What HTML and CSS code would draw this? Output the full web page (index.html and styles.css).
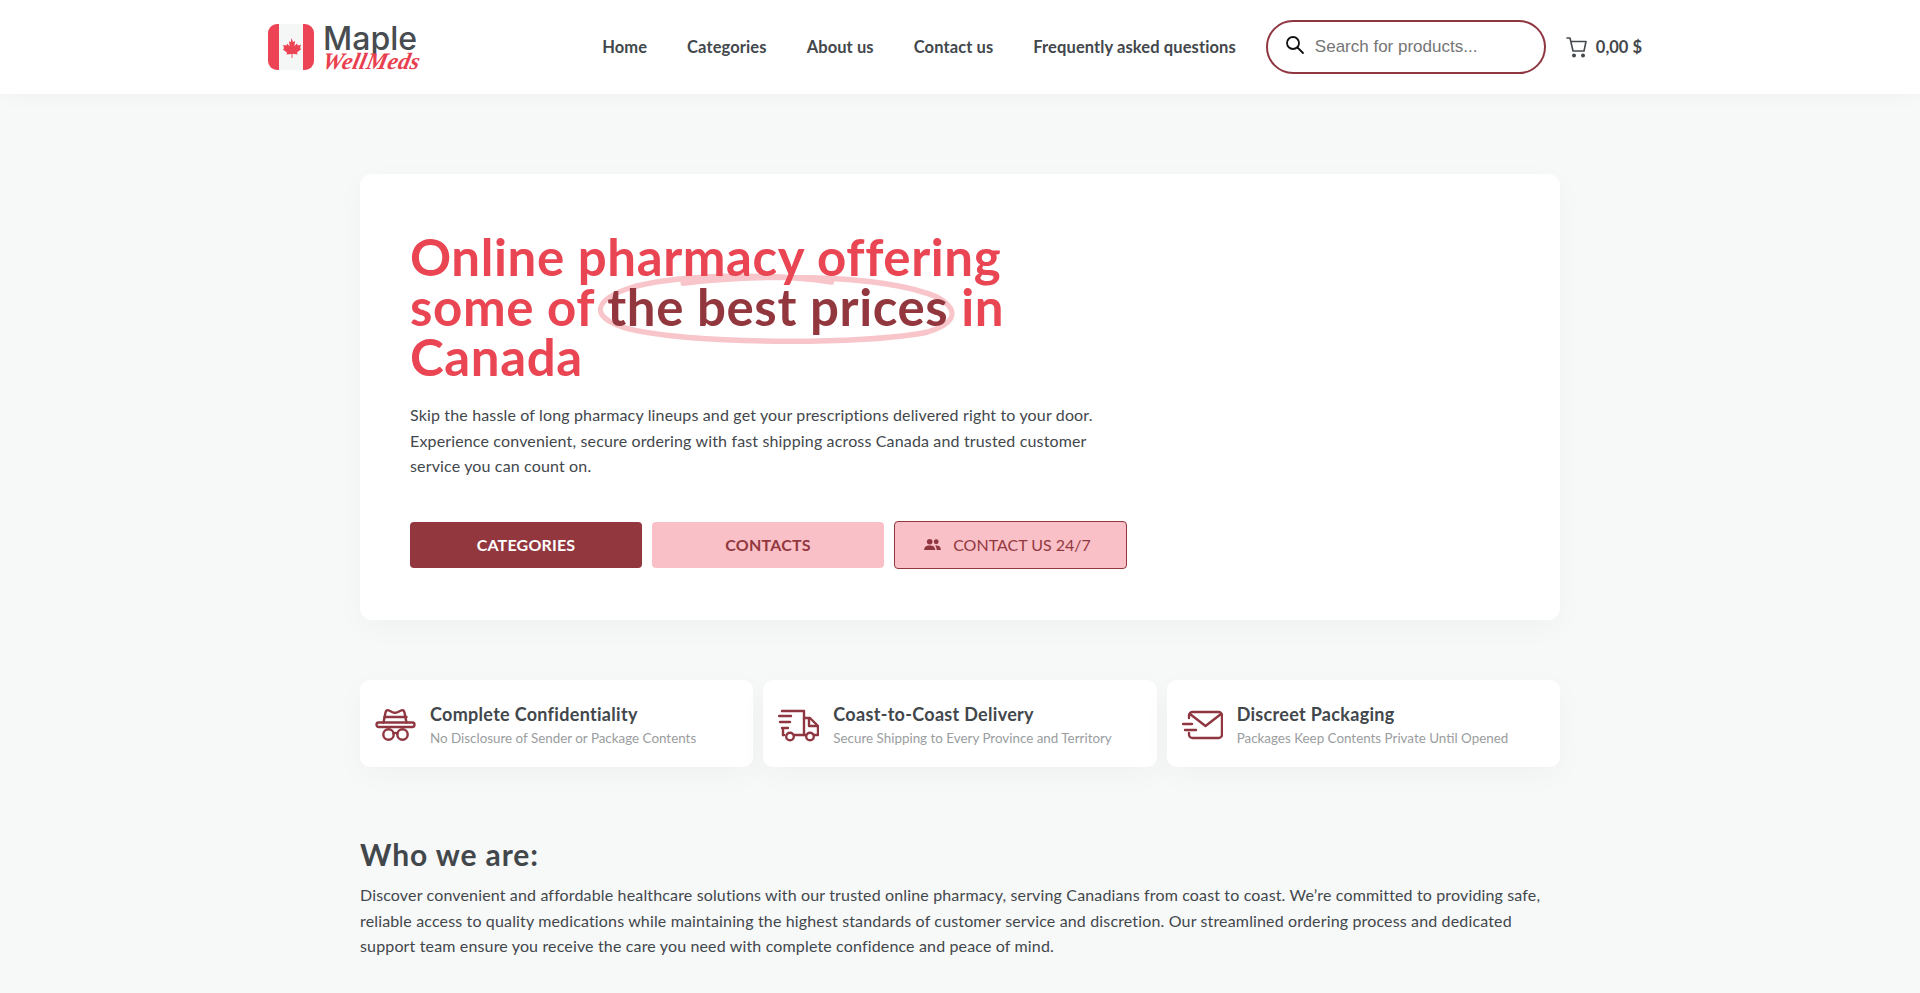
FILE: index.html
```html
<!DOCTYPE html>
<html lang="en">
<head>
  <meta charset="UTF-8" />
  <meta name="viewport" content="width=device-width, initial-scale=1" />
  <title>Maple WellMeds</title>
  <link rel="stylesheet" href="styles.css">
</head>
<body>

  <!-- Header -->
  <header class="site-header">
    <div class="header-inner">
      <a class="logo" href="#">
        <svg class="logo-flag" viewBox="0 0 46 46">
          <rect width="46" height="46" rx="9" fill="#ec4455" />
          <rect x="11" width="24" height="46" fill="#f5f6f6" />
          <path d="M23 14l2.200 4 2-1-.8 5 2.600-2.400.8 1.800 3.200-.6-1 3.400 1.400.8-4.400 3.600.6 1.800-4.800-.6-.3 0.200V34h-.9v-3.800l-.3-.2-4.800.6.600-1.800-4.400-3.600 1.400-.8-1-3.400 3.200.6.800-1.800 2.600 2.400-.8-5 2 1z" fill="#ec4455" />
        </svg>
        <span class="logo-text">
          <span class="logo-maple">Maple</span>
          <span class="logo-well">WellMeds</span>
        </span>
      </a>

      <nav class="main-nav">
        <a href="#">Home</a>
        <a href="#">Categories</a>
        <a href="#">About us</a>
        <a href="#">Contact us</a>
        <a href="#">Frequently asked questions</a>
      </nav>

      <form class="search-box" action="#">
        <svg class="search-icon" viewBox="0 0 20 20" fill="none" stroke="#111" stroke-width="1.800">
          <circle cx="8" cy="8" r="6" />
          <path d="M12.500 12.500L18 18" stroke-linecap="round" />
        </svg>
        <input type="text" placeholder="Search for products..." />
      </form>

      <a class="cart" href="#">
        <svg class="cart-icon" viewBox="0 0 22 22" fill="none" stroke="#454a4f" stroke-width="1.600">
          <path d="M1 2h3l3 13h11l2-9.500H5" stroke-linejoin="round" stroke-linecap="round" />
          <circle cx="8" cy="19.500" r="1.200" fill="#454a4f" />
          <circle cx="17" cy="19.500" r="1.200" fill="#454a4f" />
        </svg>
        <span>0,00 $</span>
      </a>
    </div>
  </header>

  <main class="page">
    <!-- Hero -->
    <section class="hero">
      <h1>Online pharmacy offering some of <span class="circled">the best prices<svg class="circle-mark" viewBox="0 0 360 72" preserveAspectRatio="none" fill="none"><path d="M88 15C150 8 280 4 340 28C362 40 358 52 330 60C270 72 90 72 30 56C-4 46-2 30 40 18C90 6 180 6 235 14" stroke="#f8c5ca" stroke-width="5" stroke-linecap="round"/></svg></span> in Canada</h1>
      <p class="hero-text">Skip the hassle of long pharmacy lineups and get your prescriptions delivered right to your door. Experience convenient, secure ordering with fast shipping across Canada and trusted customer service you can count on.</p>
      <div class="hero-buttons">
        <a class="btn btn-dark" href="#">CATEGORIES</a>
        <a class="btn btn-pink" href="#">CONTACTS</a>
        <a class="btn btn-outline" href="#">
          <svg class="btn-icon" viewBox="0 0 18 14" fill="#8f3640">
            <circle cx="6" cy="4" r="3" />
            <circle cx="13" cy="4" r="2.600" />
            <path d="M0 13c0-3.500 2.500-5 6-5s6 1.500 6 5zM13.500 13c0-2-.6-3.600-1.800-4.800.5-.1 1-.2 1.500-.2 3 0 4.800 1.500 4.800 5z" />
          </svg>
          CONTACT US 24/7
        </a>
      </div>
    </section>

    <!-- Features -->
    <section class="features">
      <div class="feature">
        <svg class="feature-icon" viewBox="0 0 41 36" fill="none" stroke="#8f3640" stroke-width="2.400" stroke-linecap="round" stroke-linejoin="round">
          <path d="M8.500 15.500l2-10c.4-2 2-3 3.500-2l3 1.500c2 1 4 1 6 0l3-1.500c1.500-1 3.100 0 3.500 2l2 10" />
          <path d="M9.500 10h22" />
          <rect x="1.500" y="15.500" width="38" height="4.500" rx="2.200" />
          <circle cx="13.500" cy="27.500" r="5.200" />
          <circle cx="27.500" cy="27.500" r="5.200" />
          <path d="M18.500 26.500c1.300-.8 2.700-.8 4 0" />
        </svg>
        <div>
          <h3>Complete Confidentiality</h3>
          <p>No Disclosure of Sender or Package Contents</p>
        </div>
      </div>
      <div class="feature">
        <svg class="feature-icon" viewBox="0 0 41 36" fill="none" stroke="#8f3640" stroke-width="2.400" stroke-linecap="round" stroke-linejoin="round">
          <path d="M4 4h22v24H16M5 28h1" />
          <path d="M1 9h12M2 15h10M4 21h6" />
          <path d="M26 11h6l8 8v9h-4M26 28h2" />
          <path d="M31 12v7h8" />
          <path d="M5 22v6" />
          <circle cx="12" cy="29.500" r="3.800" />
          <circle cx="32" cy="29.500" r="3.800" />
        </svg>
        <div>
          <h3>Coast-to-Coast Delivery</h3>
          <p>Secure Shipping to Every Province and Territory</p>
        </div>
      </div>
      <div class="feature">
        <svg class="feature-icon" viewBox="0 0 41 36" fill="none" stroke="#8f3640" stroke-width="2.400" stroke-linecap="round" stroke-linejoin="round">
          <path d="M7 11V8.500A3.500 3.500 0 0 1 10.500 5h26A3.500 3.500 0 0 1 40 8.500v19a3.500 3.500 0 0 1-3.500 3.500h-26A3.500 3.500 0 0 1 7 27.500V26" />
          <path d="M8 7l15.500 12L39 7" />
          <path d="M1 17h9M3 23h11" />
        </svg>
        <div>
          <h3>Discreet Packaging</h3>
          <p>Packages Keep Contents Private Until Opened</p>
        </div>
      </div>
    </section>

    <!-- About -->
    <section class="about">
      <h2>Who we are:</h2>
      <p>Discover convenient and affordable healthcare solutions with our trusted online pharmacy, serving Canadians from coast to coast. We’re committed to providing safe, reliable access to quality medications while maintaining the highest standards of customer service and discretion. Our streamlined ordering process and dedicated support team ensure you receive the care you need with complete confidence and peace of mind.</p>
    </section>
  </main>

</body>
</html>
```

FILE: styles.css
```css
/* Reset & basics */
* {
  box-sizing: border-box;
}
body {
  font-family: 'Lato', 'Noto Sans', sans-serif;
  background: #f7f8f8;
  margin: 0;
  padding: 0;
  height: 993px;
  overflow: hidden;
  color: #42474c;
}
a {
  color: inherit;
  text-decoration: none;
}

/* Header */
.site-header {
  background: #fff;
  height: 94px;
  box-shadow: 0 2px 20px rgba(0, 0, 0, 0.03);
}
.header-inner {
  height: 100%;
  padding: 0 278px 0 268px;
  display: flex;
  align-items: center;
}
.logo {
  display: flex;
  align-items: center;
  gap: 9px;
}
.logo-flag {
  width: 46px;
  height: 46px;
}
.logo-text {
  display: flex;
  flex-direction: column;
  height: 46px;
}
.logo-maple {
  font-family: 'Inter', sans-serif;
  font-size: 32px;
  font-weight: 500;
  line-height: 30px;
  color: #484b4f;
}
.logo-well {
  font-family: 'Liberation Serif', serif;
  font-style: italic;
  font-weight: 700;
  font-size: 23.500px;
  line-height: 20px;
  margin-top: -3px;
  letter-spacing: 0.3px;
  color: #e9404f;
  transform: skewX(-12deg);
}
.main-nav {
  margin-left: auto;
  display: flex;
  gap: 40px;
  font-size: 16.500px;
  font-weight: 700;
  letter-spacing: 0.1px;
}
.search-box {
  width: 280px;
  height: 54px;
  margin-left: 30px;
  padding: 0 17px;
  border: 2px solid #8f3640;
  border-radius: 27px;
  display: flex;
  align-items: center;
  gap: 8px;
}
.search-icon {
  width: 20px;
  height: 20px;
  margin-bottom: 4px;
}
.search-box input {
  flex: 1;
  min-width: 0;
  border: none;
  outline: none;
  background: none;
  font-family: 'Liberation Sans', sans-serif;
  font-size: 17px;
}
.search-box input::placeholder {
  color: #757575;
}
.cart {
  margin-left: 20px;
  display: flex;
  align-items: center;
  gap: 8px;
  font-size: 16.500px;
  font-weight: 700;
}
.cart-icon {
  width: 22px;
  height: 22px;
}

/* Page */
.page {
  width: 1200px;
  margin: 0 auto;
  padding-top: 80px;
}
.hero {
  background: #fff;
  height: 446px;
  padding: 58px 50px 0;
  border-radius: 12px;
  box-shadow: 0 8px 30px rgba(0, 0, 0, 0.03);
}
.hero h1 {
  width: 620px;
  margin: 0;
  font-size: 51px;
  line-height: 50px;
  font-weight: 700;
  letter-spacing: 0.6px;
  color: #e94553;
  isolation: isolate;
}
.circled {
  position: relative;
  color: #93373f;
}
.circle-mark {
  position: absolute;
  left: -13px;
  top: -9px;
  width: 364px;
  height: 78px;
  z-index: -1;
}
.hero-text {
  width: 720px;
  margin: 20px 0 0;
  font-size: 16px;
  line-height: 25.600px;
  letter-spacing: 0.15px;
}
.hero-buttons {
  display: flex;
  align-items: center;
  gap: 10px;
  margin-top: 42px;
}
.btn {
  width: 232px;
  height: 46px;
  border-radius: 4px;
  display: flex;
  align-items: center;
  justify-content: center;
  font-size: 16px;
  font-weight: 700;
  letter-spacing: 0.2px;
}
.btn-dark {
  background: #93373f;
  color: #fff;
}
.btn-pink {
  background: #f9c1c7;
  color: #93373f;
}
.btn-outline {
  width: 233px;
  height: 48px;
  padding-right: 6px;
  gap: 12px;
  background: #f9c1c7;
  color: #93373f;
  border: 1px solid #93373f;
  font-weight: 400;
  letter-spacing: 0;
}
.btn-icon {
  width: 17px;
  height: 13px;
}

/* Features */
.features {
  display: flex;
  gap: 10px;
  margin-top: 60px;
}
.feature {
  flex: 1;
  height: 87px;
  background: #fff;
  border-radius: 10px;
  padding: 2px 15px 0;
  display: flex;
  align-items: center;
  gap: 14px;
  box-shadow: 0 8px 30px rgba(0, 0, 0, 0.03);
}
.feature-icon {
  width: 41px;
  height: 36px;
  flex-shrink: 0;
}
.feature h3 {
  margin: 0;
  font-size: 18px;
  line-height: 26px;
  font-weight: 700;
  letter-spacing: 0.3px;
}
.feature p {
  margin: 1px 0 0;
  font-size: 13.400px;
  line-height: 20px;
  color: #9a9da0;
}

/* About */
.about {
  margin-top: 69px;
}
.about h2 {
  margin: 0 0 10px;
  font-size: 30px;
  line-height: 36px;
  font-weight: 700;
  letter-spacing: 0.9px;
}
.about p {
  margin: 0;
  font-size: 16px;
  line-height: 25.600px;
  letter-spacing: 0.15px;
}
```
